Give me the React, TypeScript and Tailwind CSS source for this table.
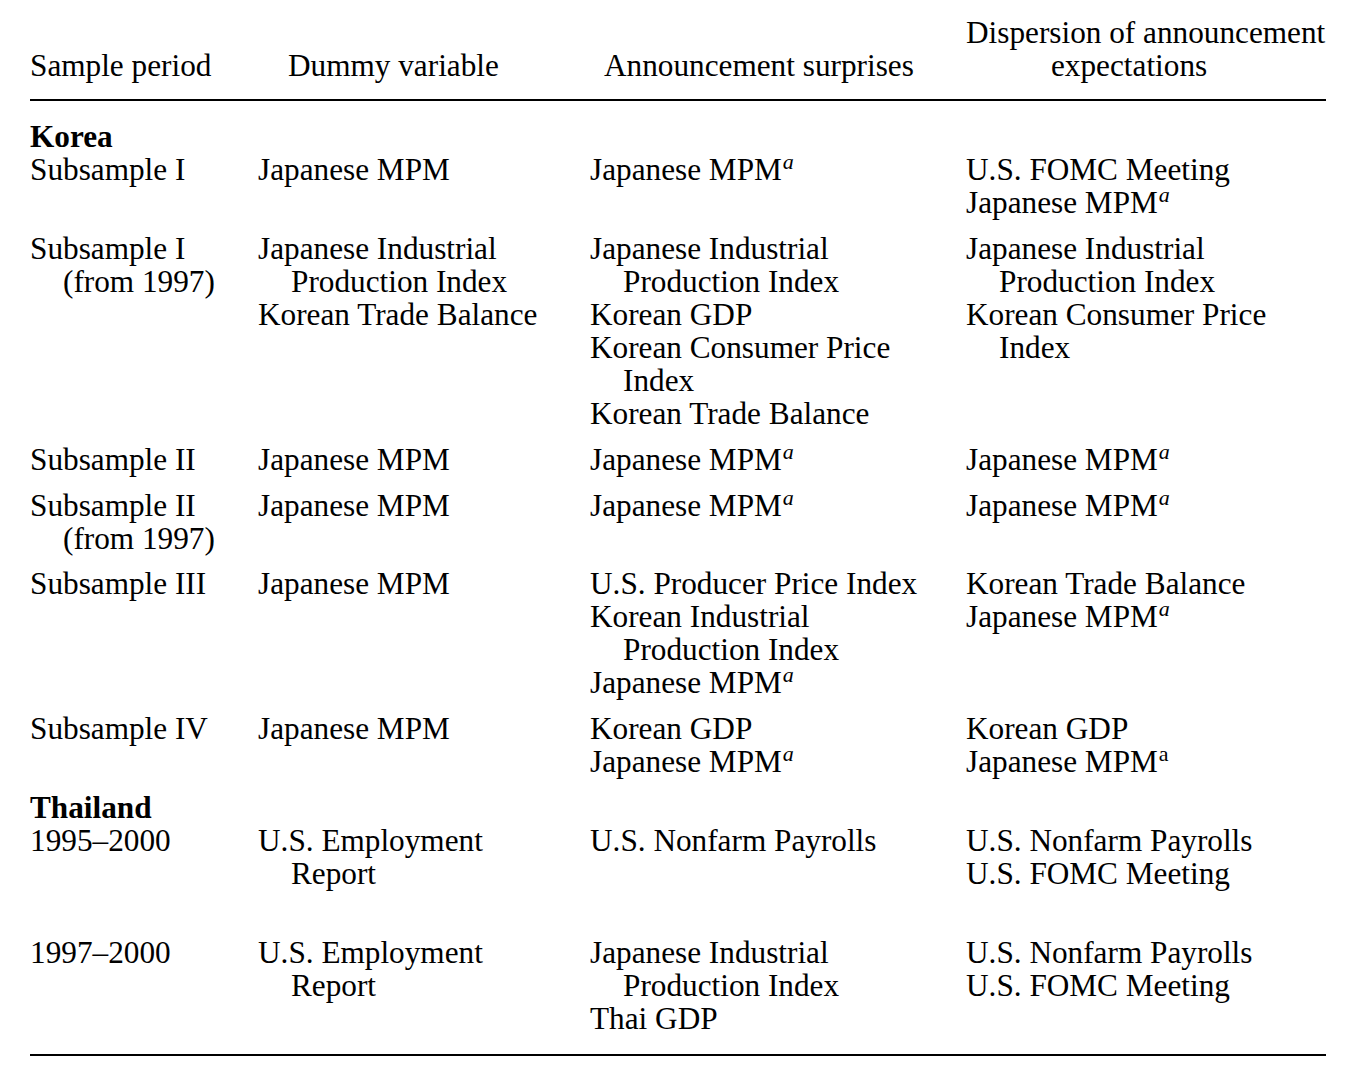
import React from "react";

type Row = {
  mt: string;
  c1: string[];
  c2: string[];
  c3: string[];
  c4: string[];
  bold?: boolean;
};

function Line({ s }: { s: string }) {
  let text = s;
  let indent = false;
  let sup: "i" | "n" | null = null;
  if (text.startsWith(">")) {
    indent = true;
    text = text.slice(1);
  }
  if (text.endsWith("^a")) {
    sup = "i";
    text = text.slice(0, -2);
  } else if (text.endsWith("^A")) {
    sup = "n";
    text = text.slice(0, -2);
  }
  return (
    <div className={indent ? "pl-[33px] whitespace-nowrap" : "whitespace-nowrap"}>
      {text}
      {sup === "i" && (
        <span className="inline-block align-top pl-[1px] text-[22px] italic leading-[18px]">a</span>
      )}
      {sup === "n" && (
        <span className="inline-block align-top pl-[1px] text-[22px] leading-[18px]">a</span>
      )}
    </div>
  );
}

function Cell({ lines }: { lines: string[] }) {
  return (
    <div>
      {lines.map((l, i) => (
        <Line key={i} s={l} />
      ))}
    </div>
  );
}

const rows: Row[] = [
  { mt: "mt-[19px]", c1: ["Korea"], c2: [], c3: [], c4: [], bold: true },
  {
    mt: "mt-0",
    c1: ["Subsample I"],
    c2: ["Japanese MPM"],
    c3: ["Japanese MPM^a"],
    c4: ["U.S. FOMC Meeting", "Japanese MPM^a"],
  },
  {
    mt: "mt-[13px]",
    c1: ["Subsample I", ">(from 1997)"],
    c2: ["Japanese Industrial", ">Production Index", "Korean Trade Balance"],
    c3: [
      "Japanese Industrial",
      ">Production Index",
      "Korean GDP",
      "Korean Consumer Price",
      ">Index",
      "Korean Trade Balance",
    ],
    c4: ["Japanese Industrial", ">Production Index", "Korean Consumer Price", ">Index"],
  },
  {
    mt: "mt-[13px]",
    c1: ["Subsample II"],
    c2: ["Japanese MPM"],
    c3: ["Japanese MPM^a"],
    c4: ["Japanese MPM^a"],
  },
  {
    mt: "mt-[13px]",
    c1: ["Subsample II", ">(from 1997)"],
    c2: ["Japanese MPM"],
    c3: ["Japanese MPM^a"],
    c4: ["Japanese MPM^a"],
  },
  {
    mt: "mt-[12px]",
    c1: ["Subsample III"],
    c2: ["Japanese MPM"],
    c3: ["U.S. Producer Price Index", "Korean Industrial", ">Production Index", "Japanese MPM^a"],
    c4: ["Korean Trade Balance", "Japanese MPM^a"],
  },
  {
    mt: "mt-[13px]",
    c1: ["Subsample IV"],
    c2: ["Japanese MPM"],
    c3: ["Korean GDP", "Japanese MPM^a"],
    c4: ["Korean GDP", "Japanese MPM^A"],
  },
  { mt: "mt-[13px]", c1: ["Thailand"], c2: [], c3: [], c4: [], bold: true },
  {
    mt: "mt-0",
    c1: ["1995–2000"],
    c2: ["U.S. Employment", ">Report"],
    c3: ["U.S. Nonfarm Payrolls"],
    c4: ["U.S. Nonfarm Payrolls", "U.S. FOMC Meeting"],
  },
  {
    mt: "mt-[46px]",
    c1: ["1997–2000"],
    c2: ["U.S. Employment", ">Report"],
    c3: ["Japanese Industrial", ">Production Index", "Thai GDP"],
    c4: ["U.S. Nonfarm Payrolls", "U.S. FOMC Meeting"],
  },
];

export default function App() {
  return (
    <div
      className="w-[1350px] h-[1072px] bg-white text-black text-[31.25px] leading-[33px] px-[30px] pt-[16px] overflow-hidden"
      style={{ fontFamily: '"Liberation Serif", "Times New Roman", serif' }}
    >
      <div className="w-[1296px]">
        <div className="grid grid-cols-[228px_332px_376px_360px] items-end">
          <div className="whitespace-nowrap">Sample period</div>
          <div className="pl-[30px] whitespace-nowrap">Dummy variable</div>
          <div className="pl-[14px] whitespace-nowrap">Announcement surprises</div>
          <div>
            <div className="whitespace-nowrap">Dispersion of announcement</div>
            <div className="pl-[85px] whitespace-nowrap">expectations</div>
          </div>
        </div>
        <div className="mt-[17px] h-[2px] bg-black" />
        {rows.map((r, i) => (
          <div
            key={i}
            className={`grid grid-cols-[228px_332px_376px_360px] ${r.mt}`}
          >
            <div className={r.bold ? "font-bold" : ""}>
              <Cell lines={r.c1} />
            </div>
            <Cell lines={r.c2} />
            <Cell lines={r.c3} />
            <Cell lines={r.c4} />
          </div>
        ))}
        <div className="mt-[19px] h-[2px] bg-black" />
      </div>
    </div>
  );
}
